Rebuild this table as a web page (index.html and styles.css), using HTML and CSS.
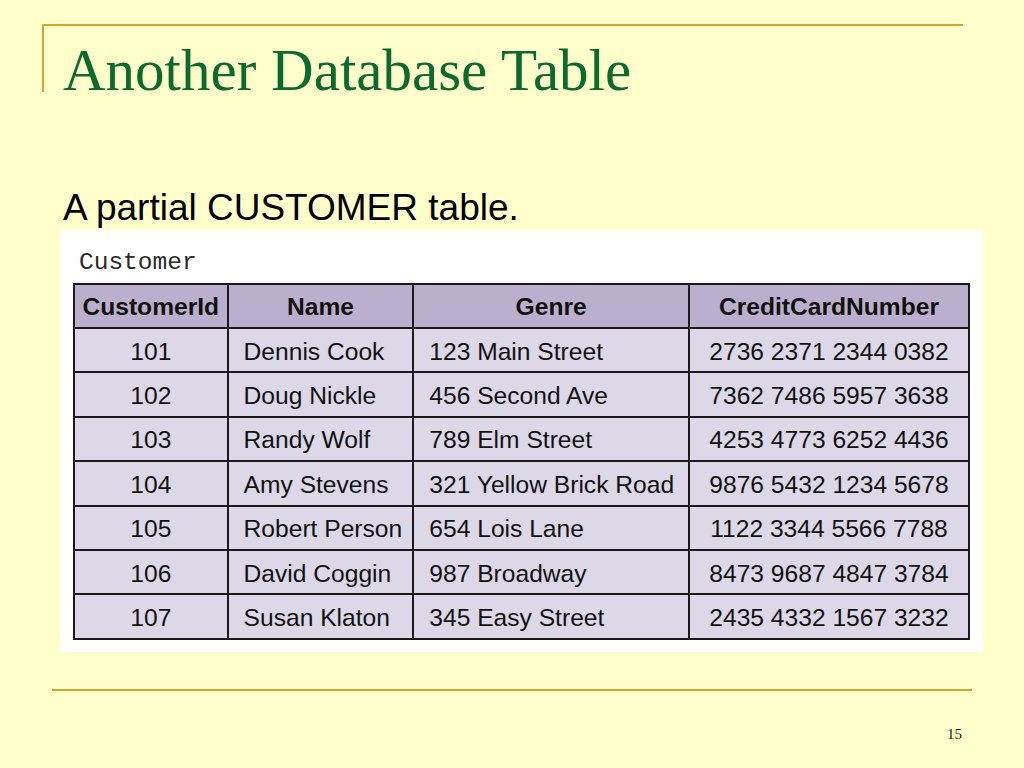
FILE: index.html
```html
<!DOCTYPE html>
<html>
<head>
<meta charset="utf-8">
<title>Another Database Table</title>
<link rel="stylesheet" href="styles.css">
</head>
<body>
<div class="slide">
  <header class="title-frame">
    <h1 class="title">Another Database Table</h1>
  </header>
  <p class="subtitle">A partial CUSTOMER table.</p>
  <figure class="figure">
    <div class="caption">Customer</div>
    <table class="grid">
      <thead>
        <tr><th class="c1">CustomerId</th><th class="c2">Name</th><th class="c3">Genre</th><th class="c4">CreditCardNumber</th></tr>
      </thead>
      <tbody>
        <tr><td class="id">101</td><td>Dennis Cook</td><td>123 Main Street</td><td class="cc">2736 2371 2344 0382</td></tr>
        <tr><td class="id">102</td><td>Doug Nickle</td><td>456 Second Ave</td><td class="cc">7362 7486 5957 3638</td></tr>
        <tr><td class="id">103</td><td>Randy Wolf</td><td>789 Elm Street</td><td class="cc">4253 4773 6252 4436</td></tr>
        <tr><td class="id">104</td><td>Amy Stevens</td><td>321 Yellow Brick Road</td><td class="cc">9876 5432 1234 5678</td></tr>
        <tr><td class="id">105</td><td>Robert Person</td><td>654 Lois Lane</td><td class="cc">1122 3344 5566 7788</td></tr>
        <tr><td class="id">106</td><td>David Coggin</td><td>987 Broadway</td><td class="cc">8473 9687 4847 3784</td></tr>
        <tr><td class="id">107</td><td>Susan Klaton</td><td>345 Easy Street</td><td class="cc">2435 4332 1567 3232</td></tr>
      </tbody>
    </table>
  </figure>
  <footer class="footer">
    <div class="rule"></div>
    <div class="page-num">15</div>
  </footer>
</div>
</body>
</html>
```
FILE: styles.css
```css
html, body {
  margin: 0;
  padding: 0;
  background: #FFFFCC;
}

.slide {
  width: 1024px;
  height: 768px;
  background: #FFFFCC;
  overflow: hidden;
  display: flow-root;
}

.title-frame {
  margin: 24px 0 0 42px;
  width: 921px;
  height: 68px;
  border-top: 2px solid #D4A42E;
  border-left: 2px solid #D4A42E;
  box-sizing: border-box;
  padding-left: 19px;
  padding-top: 11px;
}

.title {
  margin: 0;
  font-family: "Liberation Serif", "Times New Roman", serif;
  font-weight: normal;
  font-size: 59px;
  line-height: 66px;
  color: #0B6A2C;
  white-space: nowrap;
}

.subtitle {
  margin: 96px 0 0 63px;
  font-family: "Liberation Sans", Arial, sans-serif;
  font-size: 37px;
  line-height: 40px;
  color: #000;
}

.figure {
  margin: 2px 0 0 60px;
  width: 923px;
  height: 422px;
  background: #FFFFFF;
  box-sizing: border-box;
  padding: 21px 0 0 13px;
}

.caption {
  font-family: "Liberation Mono", "Courier New", monospace;
  font-size: 24.5px;
  line-height: 24px;
  color: #2a2a2a;
  padding-left: 6px;
  margin-bottom: 8px;
}

.grid {
  border-collapse: collapse;
  width: 897px;
  font-family: "Liberation Sans", Helvetica, Arial, sans-serif;
  font-size: 24.6px;
  color: #111;
}

.grid th, .grid td {
  border: 2px solid #1A1A1A;
  padding: 0 0 0 15px;
  text-align: left;
  white-space: nowrap;
}

.grid th {
  background: #BAB0CD;
  font-weight: bold;
  text-align: center;
  padding: 1px 0 0 0;
  height: 41px;
}

.grid td {
  background: #DCD8E8;
  height: 39.4px;
  padding-top: 3px;
}

.grid td.id,
.grid td.cc {
  text-align: center;
  padding-left: 0;
}

.c1 { width: 152px; }
.c2 { width: 184px; }
.c3 { width: 274px; }
.c4 { width: 279px; }

.footer {
  margin: 37px 0 0 52px;
  width: 920px;
}

.rule {
  height: 2px;
  background: #D4A42E;
}

.page-num {
  font-family: "Liberation Serif", "Times New Roman", serif;
  font-size: 15px;
  color: #222;
  text-align: right;
  padding-right: 10px;
  margin-top: 35px;
}
```
